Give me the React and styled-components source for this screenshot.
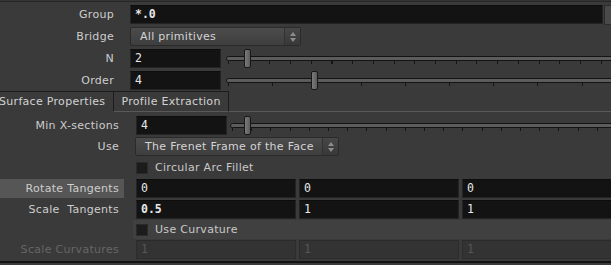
import React from "react";
import styled, { createGlobalStyle } from "styled-components";

const GlobalStyle = createGlobalStyle`
  html, body {
    margin: 0;
    padding: 0;
    background: #3a3a3a;
  }
  body {
    font-family: "DejaVu Sans", "Liberation Sans", sans-serif;
    font-size: 11px;
    letter-spacing: 0.3px;
  }
`;

const TOP = { w: 120, pad: 6, gap: 10 };
const BOTTOM = { w: 124, pad: 5, gap: 12 };

function App() {
    return (
        <>
            <GlobalStyle />
            <Panel>
                <Section>
                    <Row>
                        <Label {...TOP}>Group</Label>
                        <Field bold>*.0</Field>
                        <SideButton />
                    </Row>
                    <Row>
                        <Label {...TOP}>Bridge</Label>
                        <Dropdown w={171} label="All primitives" />
                    </Row>
                    <Row>
                        <Label {...TOP}>N</Label>
                        <Field w={91}>2</Field>
                        <Slider ml={5} x={18} step={20.7} />
                    </Row>
                    <Row gap={0}>
                        <Label {...TOP}>Order</Label>
                        <Field w={91}>4</Field>
                        <Slider ml={5} x={85} step={44.2} />
                    </Row>
                </Section>

                <TabBar>
                    <Tab active>Surface Properties</Tab>
                    <Tab>Profile Extraction</Tab>
                    <TabFill />
                </TabBar>

                <Section pt={4}>
                    <Row gap={2}>
                        <Label {...BOTTOM}>Min X-sections</Label>
                        <Field w={91}>4</Field>
                        <Slider ml={3} x={14} step={19.2} />
                    </Row>
                    <Row gap={2}>
                        <Label {...BOTTOM}>Use</Label>
                        <Dropdown w={204} ml={-1} label="The Frenet Frame of the Face" />
                    </Row>
                    <Row gap={2}>
                        <Label {...BOTTOM} />
                        <Toggle label="Circular Arc Fillet" />
                    </Row>
                    <Row gap={2}>
                        <Label {...BOTTOM} hl>Rotate Tangents</Label>
                        <Vector values={["0", "0", "0"]} />
                    </Row>
                    <Row gap={1}>
                        <Label {...BOTTOM}>Scale&nbsp; Tangents</Label>
                        <Vector values={["0.5", "1", "1"]} boldFirst />
                    </Row>
                    <Row gap={1}>
                        <Label {...BOTTOM} />
                        <Band>
                            <Toggle label="Use Curvature" />
                        </Band>
                    </Row>
                    <Row gap={0}>
                        <Label {...BOTTOM} disabled>Scale Curvatures</Label>
                        <Vector values={["1", "1", "1"]} disabled />
                    </Row>
                </Section>
                <BottomRule />
            </Panel>
        </>
    );
}

function Dropdown({ w, ml, label }) {
    return (
        <Select w={w} ml={ml}>
            <span>{label}</span>
            <Arrows>
                <ArrowUp />
                <ArrowDown />
            </Arrows>
        </Select>
    );
}

function Slider({ ml, x, step }) {
    return (
        <SliderWrap ml={ml}>
            <Track />
            <Ticks step={step} />
            <Handle x={x} />
        </SliderWrap>
    );
}

function Toggle({ label }) {
    return (
        <ToggleWrap>
            <CheckBox />
            <span>{label}</span>
        </ToggleWrap>
    );
}

function Vector({ values, boldFirst, disabled }) {
    return (
        <VectorWrap>
            {values.map((v, i) => (
                <Field key={i} w={160} bold={boldFirst && i === 0} disabled={disabled}>
                    {v}
                </Field>
            ))}
        </VectorWrap>
    );
}

export default App;

const Panel = styled.div`
    width: 611px;
    height: 265px;
    overflow: hidden;
    display: flex;
    flex-direction: column;
    background: linear-gradient(#343434 0 1px, #262626 1px 2px, #3a3a3a 2px);
`;

const Section = styled.div`
    display: flex;
    flex-direction: column;
    padding-top: ${(p) => p.pt ?? 5}px;
`;

const Row = styled.div`
    display: flex;
    align-items: center;
    height: 19px;
    flex: 0 0 19px;
    margin-bottom: ${(p) => p.gap ?? 3}px;
`;

const Label = styled.div`
    flex: 0 0 ${(p) => p.w}px;
    box-sizing: border-box;
    height: 19px;
    line-height: 19px;
    padding-right: ${(p) => p.pad}px;
    margin-right: ${(p) => p.gap}px;
    text-align: right;
    white-space: nowrap;
    color: ${(p) => (p.disabled ? "#666" : "#cdcdcd")};
    background: ${(p) => (p.hl ? "#565656" : "transparent")};
`;

const Field = styled.div`
    box-sizing: border-box;
    height: 19px;
    flex: ${(p) => (p.w ? `0 0 ${p.w}px` : "1")};
    padding-left: 4px;
    background: ${(p) => (p.disabled ? "#333" : "#131313")};
    border: 1px solid ${(p) => (p.disabled ? "#2c2c2c" : "#242424")};
    border-top-color: ${(p) => (p.disabled ? "#2a2a2a" : "#0d0d0d")};
    color: ${(p) => (p.disabled ? "#575757" : "#e8e8e8")};
    font-family: "DejaVu Sans Mono", "Liberation Mono", monospace;
    font-size: 11.5px;
    letter-spacing: 0;
    font-weight: ${(p) => (p.bold ? "bold" : "normal")};
    line-height: 17px;
    white-space: nowrap;
`;

const SideButton = styled.div`
    flex: 0 0 7px;
    height: 20px;
    margin-left: 1px;
    box-sizing: border-box;
    background: #4a4a4a;
    border: 1px solid #2c2c2c;
    border-right: none;
    border-radius: 2px 0 0 2px;
`;

const Select = styled.div`
    box-sizing: border-box;
    width: ${(p) => p.w}px;
    height: 19px;
    margin-left: ${(p) => p.ml ?? 0}px;
    display: flex;
    align-items: center;
    padding-left: 9px;
    background: linear-gradient(#4c4c4c, #3e3e3e);
    border: 1px solid #2a2a2a;
    border-radius: 2px;
    color: #d4d4d4;
    white-space: nowrap;
`;

const Arrows = styled.div`
    margin-left: auto;
    width: 15px;
    height: 100%;
    display: flex;
    flex-direction: column;
    align-items: center;
    justify-content: center;
    gap: 2px;
    border-left: 1px solid #323232;
    background: linear-gradient(#474747, #383838);
`;

const ArrowUp = styled.div`
    width: 0;
    height: 0;
    border-left: 3px solid transparent;
    border-right: 3px solid transparent;
    border-bottom: 4px solid #8c8c8c;
`;

const ArrowDown = styled.div`
    width: 0;
    height: 0;
    border-left: 3px solid transparent;
    border-right: 3px solid transparent;
    border-top: 4px solid #8c8c8c;
`;

const SliderWrap = styled.div`
    flex: 1;
    position: relative;
    height: 19px;
    margin-left: ${(p) => p.ml}px;
`;

const Track = styled.div`
    position: absolute;
    left: 0;
    right: -4px;
    top: 7px;
    height: 5px;
    box-sizing: border-box;
    background: #5c5c5c;
    border: 1px solid #141414;
    border-radius: 3px 0 0 3px;
`;

const Ticks = styled.div`
    position: absolute;
    left: 2px;
    right: 0;
    top: 12px;
    height: 3px;
    background: repeating-linear-gradient(
        to right,
        #161616 0 1px,
        transparent 1px ${(p) => p.step}px
    );
`;

const Handle = styled.div`
    position: absolute;
    top: 0;
    left: ${(p) => p.x}px;
    width: 7px;
    height: 19px;
    box-sizing: border-box;
    background: linear-gradient(to right, #7a7a7a, #5c5c5c);
    border: 1px solid #181818;
    border-radius: 2px;
`;

const TabBar = styled.div`
    display: flex;
    height: 21px;
    flex: 0 0 21px;
    margin-top: 1px;
`;

const Tab = styled.div`
    box-sizing: border-box;
    height: 21px;
    line-height: 19px;
    white-space: nowrap;
    color: #d2d2d2;
    border-top: 1px solid #1c1c1c;
    background: #3a3a3a;
    ${(p) =>
        p.active
            ? `
        margin-left: -1px;
        padding: 0 8px 0 0;
        border-bottom: none;
    `
            : `
        padding: 0 7px;
        border: 1px solid #1c1c1c;
        border-bottom: 1px solid #595959;
    `}
`;

const TabFill = styled.div`
    flex: 1;
    height: 21px;
    box-sizing: border-box;
    border-bottom: 1px solid #595959;
`;

const ToggleWrap = styled.div`
    display: flex;
    align-items: center;
    gap: 7px;
    height: 19px;
    color: #c8c8c8;
    white-space: nowrap;
`;

const CheckBox = styled.div`
    width: 12px;
    height: 12px;
    box-sizing: border-box;
    background: #1c1c1c;
    border: 1px solid #2a2a2a;
`;

const Band = styled.div`
    flex: 1;
    height: 19px;
    margin-left: -3px;
    padding-left: 3px;
    background: #404040;
`;

const VectorWrap = styled.div`
    display: flex;
    gap: 3px;
`;

const BottomRule = styled.div`
    margin-top: auto;
    margin-bottom: 2px;
    height: 2px;
    background: #131313;
`;
